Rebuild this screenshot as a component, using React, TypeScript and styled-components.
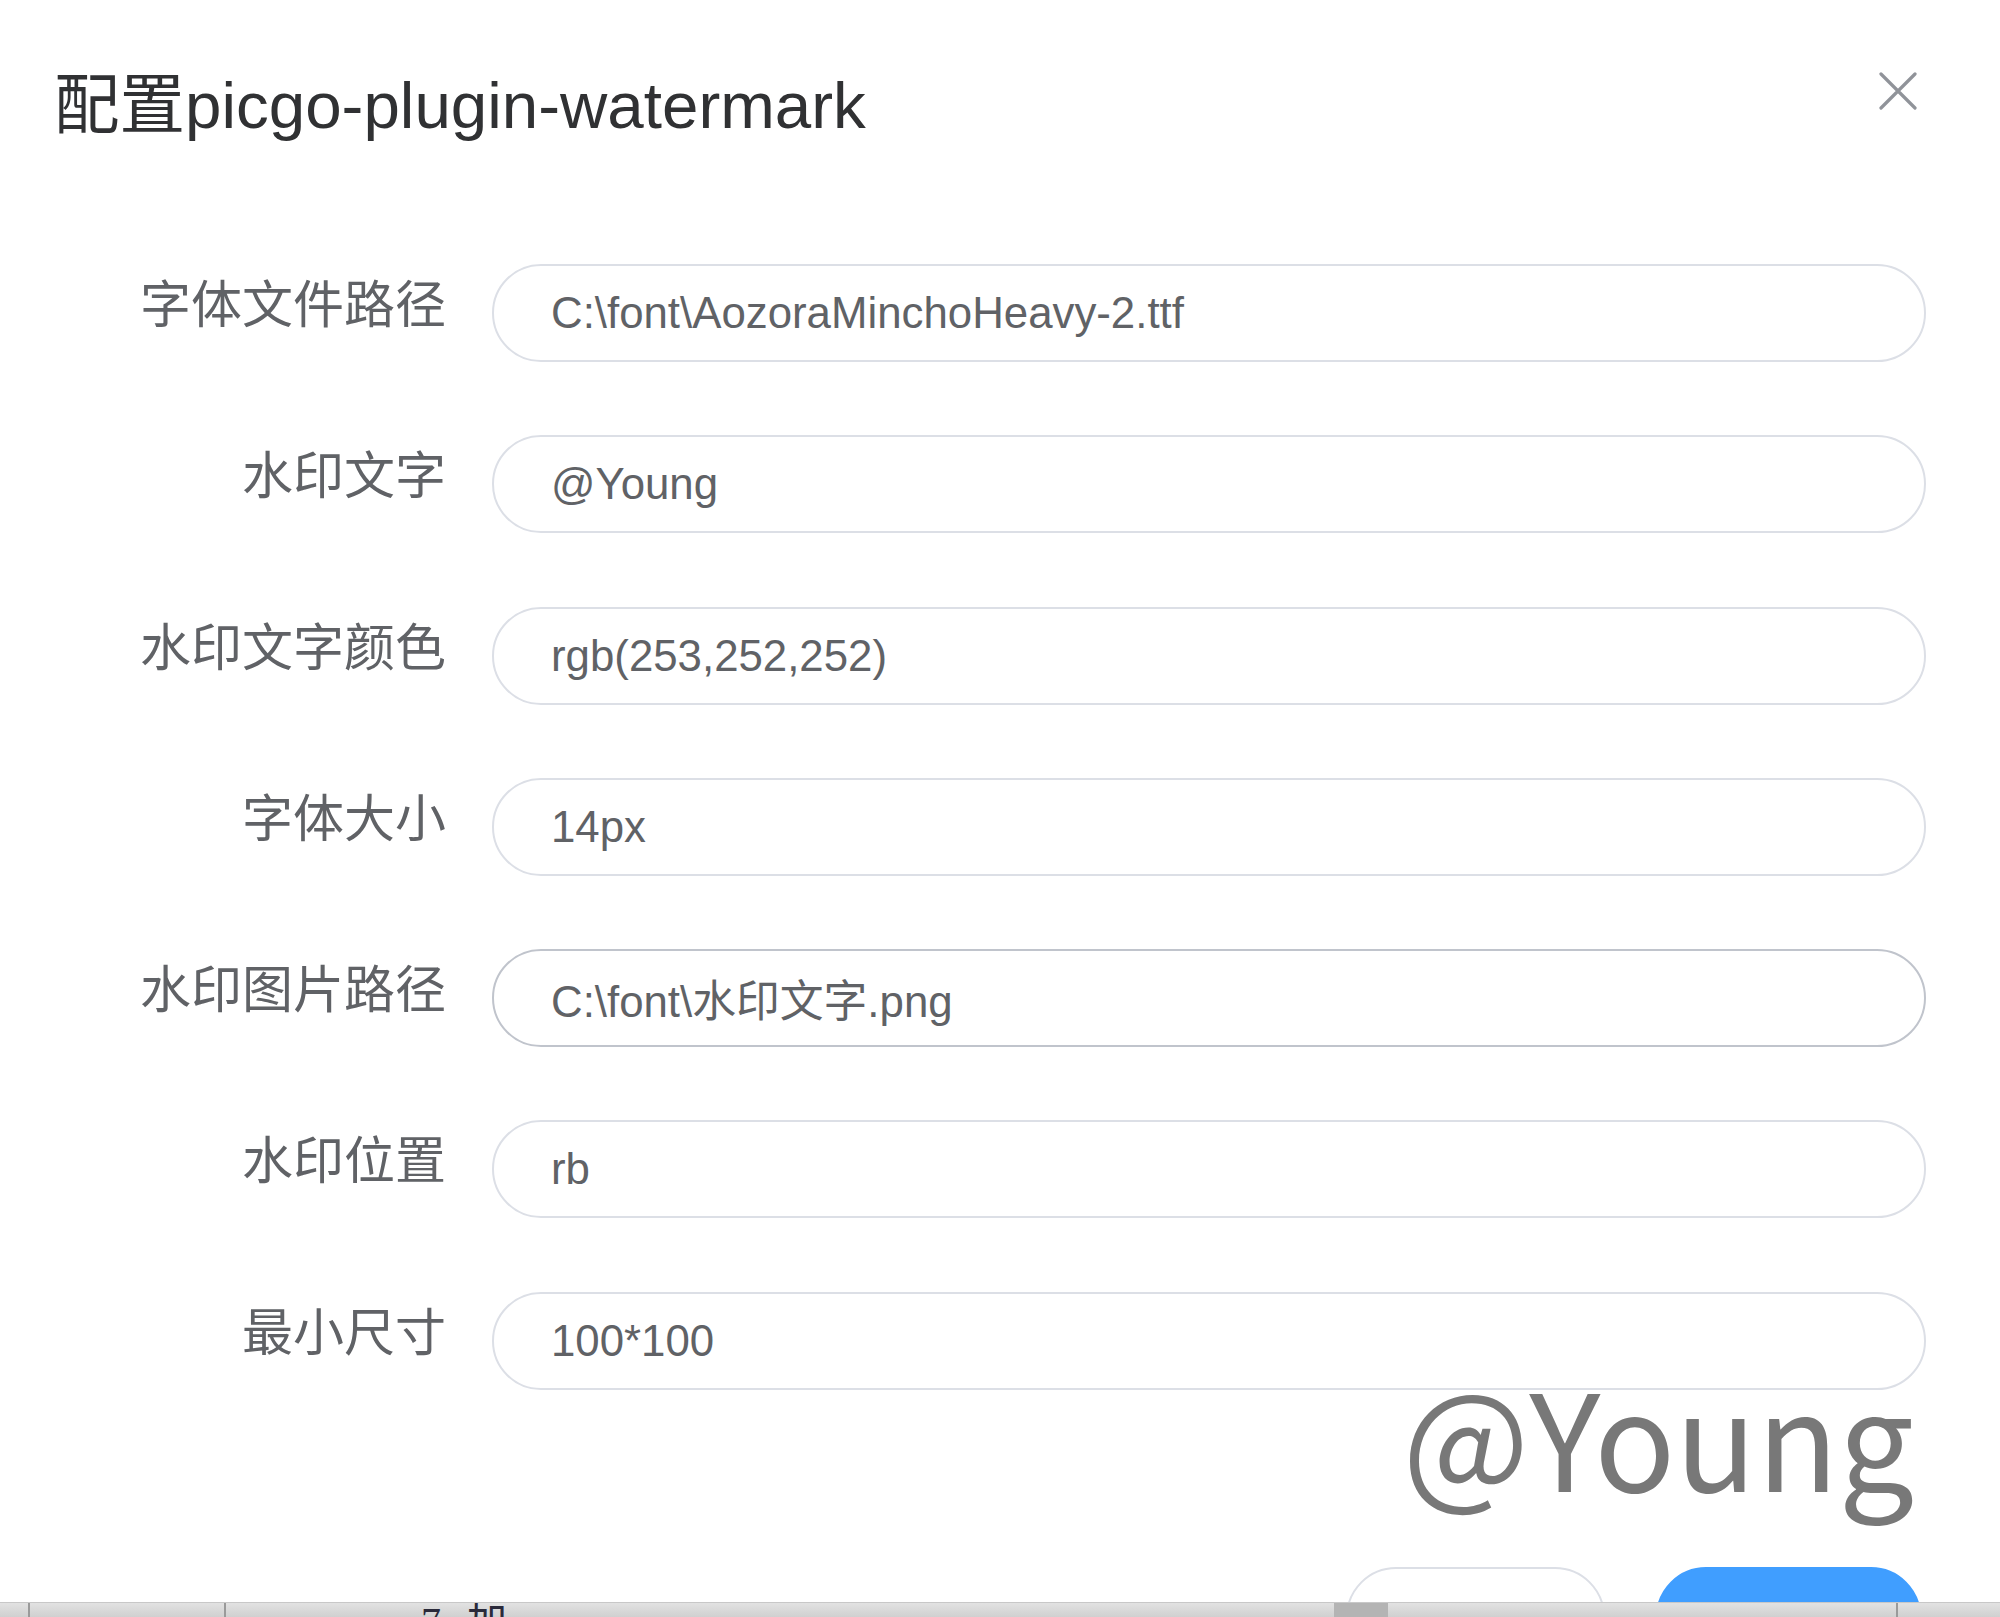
import React from "react";
import styled, { createGlobalStyle } from "styled-components";

const Global = createGlobalStyle`
  html, body { margin: 0; padding: 0; background: #ffffff; }
  body { width: 2000px; height: 1617px; overflow: hidden; }
  * { box-sizing: border-box; }
`;

const Page = styled.div`
  width: 2000px;
  height: 1617px;
  display: flex;
  flex-direction: column;
  background: #ffffff;
`;

const Dialog = styled.div`
  position: relative;
  height: 1602px;
  flex-shrink: 0;
  overflow: hidden;
  display: flex;
  flex-direction: column;
  background: #ffffff;
  & > * { flex-shrink: 0; }
`;

const Header = styled.div`
  height: 264px;
  display: flex;
  justify-content: space-between;
  align-items: flex-start;
  padding: 0 83px 0 54px;
`;

const Title = styled.div`
  margin-top: 71px;
  font-family: "Liberation Sans", "Noto Sans CJK SC", sans-serif;
  font-size: 65.5px;
  line-height: 70px;
  color: #303133;
  white-space: nowrap;
`;

const CloseButton = styled.button`
  margin-top: 72px;
  width: 38px;
  height: 38px;
  padding: 0;
  border: none;
  background: transparent;
  display: flex;
  align-items: center;
  justify-content: center;
`;

const Form = styled.div`
  display: flex;
  flex-direction: column;
  gap: 73.3px;
`;

const Row = styled.div`
  display: grid;
  grid-template-columns: 446px 1434px;
  column-gap: 46px;
  height: 98px;
`;

const Label = styled.label`
  display: flex;
  align-items: center;
  justify-content: flex-end;
  padding-bottom: 31px;
  font-family: "Noto Sans CJK SC", "Liberation Sans", sans-serif;
  font-size: 51px;
  color: #606266;
  white-space: nowrap;
`;

const Input = styled.input<{ $hover?: boolean }>`
  width: 1434px;
  height: 98px;
  border: 2px solid ${(p) => (p.$hover ? "#c0c4cc" : "#dcdfe6")};
  border-radius: 49px;
  padding: 0 40px 0 57px;
  font-family: "Liberation Sans", "Noto Sans CJK SC", sans-serif;
  font-size: 43.8px;
  color: #606266;
  background: #ffffff;
  outline: none;
`;

const Footer = styled.div`
  margin-top: 177px;
  display: flex;
  justify-content: flex-end;
  gap: 51px;
  padding-right: 79px;
`;

const Button = styled.button<{ $primary?: boolean }>`
  width: ${(p) => (p.$primary ? "265px" : "259px")};
  height: 100px;
  border-radius: 50px;
  border: 2px solid ${(p) => (p.$primary ? "#409eff" : "#dcdfe6")};
  background: ${(p) => (p.$primary ? "#409eff" : "#ffffff")};
  flex-shrink: 0;
`;

const Watermark = styled.div`
  position: absolute;
  right: 86px;
  top: 1354px;
  font-family: "Noto Sans CJK SC", "Noto Sans", sans-serif;
  font-size: 134px;
  line-height: 1.2;
  color: #787878;
  pointer-events: none;
  white-space: nowrap;
`;

const TaskStrip = styled.div`
  position: relative;
  height: 15px;
  flex-shrink: 0;
  background: linear-gradient(#e2e2e2, #d0d0d0);
  border-top: 1px solid #c8c8c8;
  overflow: hidden;
`;

const StripDivider = styled.div<{ $left: number }>`
  position: absolute;
  left: ${(p) => p.$left}px;
  top: 0;
  width: 2px;
  height: 100%;
  background: #9a9a9a;
`;

const StripBlock = styled.div`
  position: absolute;
  left: 1334px;
  top: 0;
  width: 54px;
  height: 100%;
  background: #b4b4b4;
`;

const StripText = styled.span`
  position: absolute;
  left: 421px;
  top: -1px;
  font-family: "Liberation Serif", "Noto Sans CJK SC", serif;
  font-size: 40px;
  line-height: 40px;
  color: #2a2a3a;
  letter-spacing: 8px;
`;

const fields: { label: string; value: string; hover?: boolean }[] = [
  { label: "字体文件路径", value: "C:\\font\\AozoraMinchoHeavy-2.ttf" },
  { label: "水印文字", value: "@Young" },
  { label: "水印文字颜色", value: "rgb(253,252,252)" },
  { label: "字体大小", value: "14px" },
  { label: "水印图片路径", value: "C:\\font\\水印文字.png", hover: true },
  { label: "水印位置", value: "rb" },
  { label: "最小尺寸", value: "100*100" },
];

export default function App() {
  return (
    <Page>
      <Global />
      <Dialog>
        <Header>
          <Title>配置picgo-plugin-watermark</Title>
          <CloseButton aria-label="close">
            <svg width="38" height="38" viewBox="0 0 38 38">
              <path d="M2 2 L36 36 M36 2 L2 36" stroke="#909399" strokeWidth="3.2" strokeLinecap="round" />
            </svg>
          </CloseButton>
        </Header>
        <Form>
          {fields.map((f) => (
            <Row key={f.label}>
              <Label>{f.label}</Label>
              <Input readOnly value={f.value} $hover={f.hover} />
            </Row>
          ))}
        </Form>
        <Footer>
          <Button aria-label="取消" />
          <Button $primary aria-label="确定" />
        </Footer>
        <Watermark>@Young</Watermark>
      </Dialog>
      <TaskStrip>
        <StripDivider $left={28} />
        <StripDivider $left={224} />
        <StripText>7 加</StripText>
        <StripBlock />
        <StripDivider $left={1896} />
      </TaskStrip>
    </Page>
  );
}
